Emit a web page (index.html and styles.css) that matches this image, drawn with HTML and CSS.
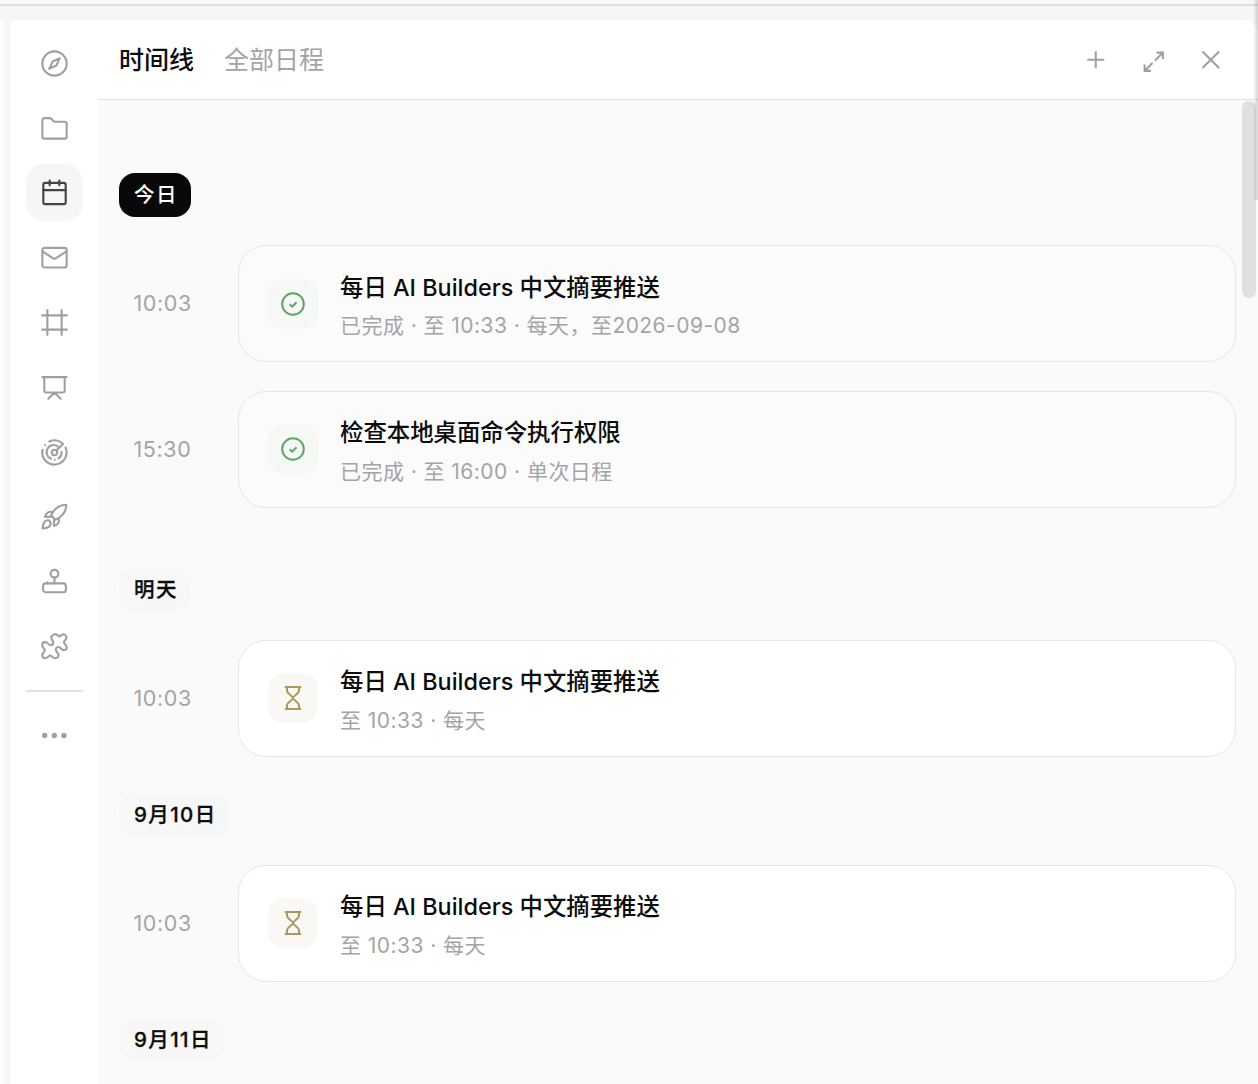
FILE: index.html
```html
<!DOCTYPE html>
<html lang="zh-CN">
  <head>
    <meta charset="UTF-8" />
    <meta name="viewport" content="width=device-width, initial-scale=1.0" />
    <title>时间线</title>
    <link rel="stylesheet" href="styles.css">
  </head>
  <body>
    <div class="top-bar"></div>
    <div class="workspace">
      <div class="left-pane"></div>
      <div class="panel">
        <nav class="side-nav">
          <a class="nav-item">
            <svg class="icon" viewBox="0 0 28 28"><circle cx="14" cy="14" r="12.6" /><path d="M19.4 8.6l-3.4 7.4-7.4 3.4 3.4-7.4z" /></svg>
          </a>
          <a class="nav-item">
            <svg class="icon" viewBox="0 0 28 28"><path d="M1.4 22.5V5.2a2 2 0 0 1 2-2h5.8a2 2 0 0 1 1.4.6l2.6 2.6a2 2 0 0 0 1.4.6h10a2 2 0 0 1 2 2v13.500a2 2 0 0 1-2 2H3.400a2 2 0 0 1-2-2z" /></svg>
          </a>
          <a class="nav-item active">
            <svg class="icon" viewBox="0 0 28 28"><rect x="2.4" y="4" width="23.2" height="22" rx="2" /><path d="M2.4 11.5h23.2M9 1.5v5M19 1.5v5" /></svg>
          </a>
          <a class="nav-item">
            <svg class="icon" viewBox="0 0 28 28"><rect x="1.4" y="4" width="25.2" height="20.4" rx="2.4" /><path d="M1.6 7.6l10.7 7a3 3 0 0 0 3.4 0l10.7-7" /></svg>
          </a>
          <a class="nav-item">
            <svg class="icon" viewBox="0 0 28 28"><path d="M1.2 6.6h25.6M1.2 21.4h25.6M6.6 1.2v25.6M21.4 1.2v25.6" /></svg>
          </a>
          <a class="nav-item">
            <svg class="icon" viewBox="0 0 28 28"><path d="M1.4 3.2h25.2M3.4 3.2v14a2 2 0 0 0 2 2h17.2a2 2 0 0 0 2-2v-14M7.6 25.6l6.4-6.4 6.4 6.4" /></svg>
          </a>
          <a class="nav-item">
            <svg class="icon" viewBox="0 0 28 28"><circle cx="14" cy="14" r="2.8" /><path d="M16 12l6.8-6.8A12.6 12.6 0 0 0 8.6 2.6M25.4 8.800A12.600 12.600 0 1 1 1.600 11.200M4.200 6.200v.1M18.600 8.600a7.400 7.400 0 1 0-8.200 11.900M21.300 13.200a7.400 7.400 0 0 1-3.200 7M14.200 21.400v.1" /></svg>
          </a>
          <a class="nav-item">
            <svg class="icon" viewBox="0 0 28 28"><path d="M10.4 12.8C13.6 5.6 18.4 2 26.2 1.8c-.2 7.8-4 12.400-11.200 15.600z" /><path d="M11.6 9.4c-3.6-1-6.4.8-7.4 5l6.2-.2M18.4 16.200c1 3.800-.8 6.400-5 7.600l.2-6.400M8.400 18.200c-3.600-1.200-6.600 1.600-6.800 8.200 6.400-.2 9.200-2.800 8.200-6.600z" /></svg>
          </a>
          <a class="nav-item">
            <svg class="icon" viewBox="0 0 28 28"><circle cx="14" cy="6" r="4" /><path d="M14 10v6M6.700 14.800v1.200" /><rect x="2.2" y="16" width="23.6" height="9.2" rx="2.6" /></svg>
          </a>
          <a class="nav-item">
            <svg class="icon" viewBox="0 0 28 28"><path d="M14.4 1.2Q12.8 1.6 11.3 3.2Q9.8 4.8 11.3 6.6Q12.8 8.4 12.6 10.5Q12.4 12.6 10.4 12.6Q8.4 12.6 7.2 10.9Q6 9.2 3.7 9.5Q1.4 9.8 1.2 12.1Q1 14.4 3 16.1Q5 17.8 3 19.7Q1 21.5 1.3 23.7Q1.6 26 4 26Q6.4 26 8 24.2Q9.5 22.4 11.5 24.5Q13.5 26.6 15.7 26Q18 25.3 18.2 23.4Q18.4 21.5 16.7 20Q15 18.5 15.4 16.5Q15.8 14.6 17.7 14.5Q19.7 14.4 20.9 16.2Q22 18 24.3 17.7Q26.6 17.3 26.7 15.3Q26.8 13.3 24.8 11.4Q22.8 9.5 24.8 7.7Q26.8 6 26.4 3.8Q26 1.7 23.9 1.5Q21.8 1.3 20.4 2.8Q19 4.4 17.5 2.6Q16 .8 14.4 1.2z" /></svg>
          </a>
          <div class="nav-divider"></div>
          <a class="nav-item">
            <svg class="icon dots" viewBox="0 0 28 28"><circle cx="3.8" cy="14" r="2.8" /><circle cx="13.8" cy="14" r="2.8" /><circle cx="23.8" cy="14" r="2.8" /></svg>
          </a>
        </nav>

        <main class="schedule">
          <header class="schedule-header">
            <div class="tabs">
              <span class="tab selected">时间线</span>
              <span class="tab">全部日程</span>
            </div>
            <div class="actions">
              <svg class="action" viewBox="0 0 24 24"><path d="M12 2.5v19M2.5 12h19" /></svg>
              <svg class="action expand" viewBox="0 0 24 24"><path d="M15 1.800h7.200V9M22 2l-8.600 8.600M9 22.200H1.800V15M2 22l8.600-8.600" /></svg>
              <svg class="action" viewBox="0 0 24 24"><path d="M2.700 2.700l18.600 18.600M21.300 2.700L2.700 21.300" /></svg>
            </div>
          </header>

          <div class="timeline">
            <section class="day">
              <h2 class="day-label today">今日</h2>
              <div class="event">
                <time class="event-time">10:03</time>
                <div class="card done">
                  <div class="status">
                    <svg viewBox="0 0 24 24"><circle cx="12" cy="12" r="10.8" /><path d="M8.7 12.3l2.4 2.3 4.4-4.4" /></svg>
                  </div>
                  <div class="info">
                    <h3>每日 AI Builders 中文摘要推送</h3>
                    <p>已完成 · 至 10:33 · 每天，至2026-09-08</p>
                  </div>
                </div>
              </div>
              <div class="event">
                <time class="event-time">15:30</time>
                <div class="card done">
                  <div class="status">
                    <svg viewBox="0 0 24 24"><circle cx="12" cy="12" r="10.8" /><path d="M8.7 12.3l2.4 2.3 4.4-4.4" /></svg>
                  </div>
                  <div class="info">
                    <h3>检查本地桌面命令执行权限</h3>
                    <p>已完成 · 至 16:00 · 单次日程</p>
                  </div>
                </div>
              </div>
            </section>

            <section class="day tomorrow">
              <h2 class="day-label">明天</h2>
              <div class="event">
                <time class="event-time">10:03</time>
                <div class="card">
                  <div class="status">
                    <svg viewBox="0 0 24 24"><path d="M3.8 1h16.4M3.8 23h16.4M6 1v3.5c0 3.5 6 5.5 6 7.5s-6 4-6 7.5V23M18 1v3.5c0 3.5-6 5.5-6 7.5s6 4 6 7.5V23" /></svg>
                  </div>
                  <div class="info">
                    <h3>每日 AI Builders 中文摘要推送</h3>
                    <p>至 10:33 · 每天</p>
                  </div>
                </div>
              </div>
            </section>

            <section class="day">
              <h2 class="day-label">9月10日</h2>
              <div class="event">
                <time class="event-time">10:03</time>
                <div class="card">
                  <div class="status">
                    <svg viewBox="0 0 24 24"><path d="M3.8 1h16.4M3.8 23h16.4M6 1v3.5c0 3.5 6 5.5 6 7.5s-6 4-6 7.5V23M18 1v3.5c0 3.5-6 5.5-6 7.5s6 4 6 7.5V23" /></svg>
                  </div>
                  <div class="info">
                    <h3>每日 AI Builders 中文摘要推送</h3>
                    <p>至 10:33 · 每天</p>
                  </div>
                </div>
              </div>
            </section>

            <section class="day">
              <h2 class="day-label">9月11日</h2>
            </section>
          </div>
          <div class="scrollbar"></div>
        </main>
      </div>
    </div>
    <div class="edge-shadow"></div>
  </body>
</html>
```
FILE: styles.css
```css
* {
  margin: 0;
  padding: 0;
  box-sizing: border-box;
}

body {
  font-family: Inter, "Noto Sans CJK SC", sans-serif;
  display: flex;
  flex-direction: column;
  height: 100vh;
  overflow: hidden;
  position: relative;
  background-color: #f6f6f4;
  color: #0c0c0c;
}

.top-bar {
  height: 6px;
  flex-shrink: 0;
  background-color: #f6f6fb;
  border-bottom: 2px solid #dddde6;
}

.workspace {
  display: flex;
  flex: 1;
  min-height: 0;
  gap: 6px;
  padding-top: 14px;
}

.left-pane {
  width: 4px;
  background-color: #fdfdfd;
  border-top-right-radius: 4px;
}

.panel {
  display: flex;
  flex: 1;
  min-width: 0;
  background-color: #fff;
  border-radius: 6px 14px 0 0;
  overflow: hidden;
}

/* icon rail */

.side-nav {
  width: 88px;
  padding-top: 14.8px;
  display: flex;
  flex-direction: column;
  align-items: center;
  gap: 7.8px;
}

.nav-item {
  width: 57px;
  height: 57px;
  flex-shrink: 0;
  border-radius: 18px;
  display: flex;
  align-items: center;
  justify-content: center;
  color: #a0a0a2;
}

.nav-item.active {
  background-color: #f6f6f6;
  color: #434345;
}

.icon {
  width: 27px;
  height: 27px;
  fill: none;
  stroke: currentColor;
  stroke-width: 2.2;
  stroke-linecap: round;
  stroke-linejoin: round;
  overflow: visible;
}

.icon.dots {
  fill: currentColor;
  stroke: none;
}

.nav-divider {
  width: 57px;
  height: 2px;
  flex-shrink: 0;
  margin: 7px 0;
  background-color: #e2e2e3;
}

/* schedule */

.schedule {
  flex: 1;
  min-width: 0;
  display: flex;
  flex-direction: column;
  position: relative;
}

.schedule-header {
  height: 80px;
  flex-shrink: 0;
  padding: 0 37px 0 21px;
  display: flex;
  align-items: center;
  justify-content: space-between;
  border-bottom: 1px solid #e1e1e2;
}

.tabs {
  display: flex;
  gap: 30px;
}

.tab {
  font-size: 25px;
  line-height: 36px;
  color: #a4a4a7;
}

.tab.selected {
  color: #0c0c0c;
  font-weight: 500;
}

.actions {
  display: flex;
  align-items: center;
  gap: 36px;
}

.action {
  width: 21.5px;
  height: 21.5px;
  fill: none;
  stroke: #a0a0a2;
  stroke-width: 2.3;
}

.action.expand {
  position: relative;
  top: 2px;
  left: 0.5px;
}

.timeline {
  flex: 1;
  min-height: 0;
  overflow: hidden;
  padding: 73px 22px 0 21px;
  background-color: #fafafa;
}

.day {
  margin-bottom: 36px;
}

.day.tomorrow {
  margin-top: 60px;
}

.day-label {
  width: fit-content;
  height: 43.5px;
  padding: 0 13px 0 15px;
  border-radius: 16px;
  background-color: #f7f7f7;
  font-size: 20.5px;
  font-weight: 500;
  line-height: 44.5px;
  letter-spacing: 1.4px;
  -webkit-text-stroke: 0.3px;
}

.day-label.today {
  background-color: #090909;
  color: #fff;
  -webkit-text-stroke: 0;
}

.event {
  display: flex;
  align-items: center;
  margin-top: 28.5px;
}

.event-time {
  width: 119px;
  padding: 0 0 1px 14.5px;
  font-size: 21.5px;
  letter-spacing: 0.6px;
  color: #a4a4a7;
}

.card {
  flex: 1;
  height: 117px;
  display: flex;
  align-items: center;
  gap: 22px;
  padding: 0 29px;
  background-color: #fff;
  border: 1px solid #e6e6e6;
  border-radius: 28px;
}

.status {
  width: 50px;
  height: 50px;
  border-radius: 16px;
  display: flex;
  align-items: center;
  justify-content: center;
  background-color: #f9f8f5;
}

.status svg {
  width: 24px;
  height: 24px;
  fill: none;
  stroke: #ab985f;
  stroke-width: 2;
}

.card.done {
  background-color: #fbfbfb;
}

.card.done .status {
  background-color: #f5f8f5;
}

.card.done .status svg {
  stroke: #5da564;
}

.info {
  padding-top: 7px;
}

.info h3 {
  font-size: 23.4px;
  font-weight: 500;
  line-height: 38.5px;
}

.info p {
  font-size: 21px;
  line-height: 38.5px;
  letter-spacing: 0.45px;
  color: #a4a4a7;
}

.scrollbar {
  position: absolute;
  top: 81px;
  right: 2px;
  width: 14px;
  height: 197px;
  border-radius: 7px;
  background-color: #e0e0e0;
}

.edge-shadow {
  position: absolute;
  top: 0;
  right: 0;
  width: 5px;
  height: 200px;
  background: linear-gradient(to right, transparent, rgba(0, 0, 0, 0.16));
}
```
